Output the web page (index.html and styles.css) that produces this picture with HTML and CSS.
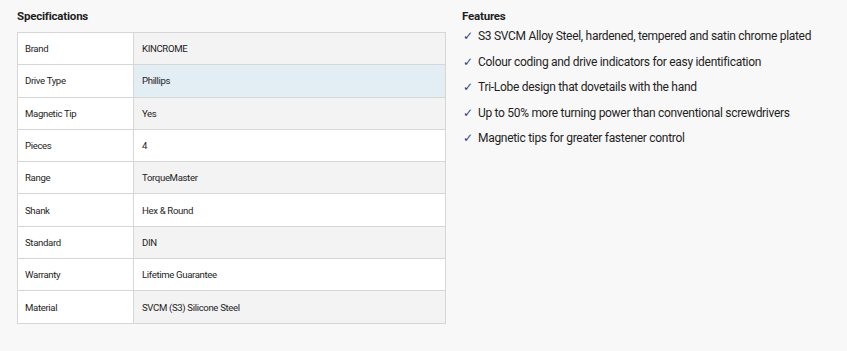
FILE: index.html
```html
<!DOCTYPE html>
<html>
<head>
<meta charset="utf-8">
<link rel="stylesheet" href="styles.css">
</head>
<body>
<div class="page">
  <section class="specs">
    <h2 class="title">Specifications</h2>
    <table class="spec-table">
      <tr><td class="k">Brand</td><td class="v">KINCROME</td></tr>
      <tr class="hover"><td class="k">Drive Type</td><td class="v">Phillips</td></tr>
      <tr><td class="k">Magnetic Tip</td><td class="v">Yes</td></tr>
      <tr><td class="k">Pieces</td><td class="v">4</td></tr>
      <tr><td class="k">Range</td><td class="v">TorqueMaster</td></tr>
      <tr><td class="k">Shank</td><td class="v">Hex &amp; Round</td></tr>
      <tr><td class="k">Standard</td><td class="v">DIN</td></tr>
      <tr><td class="k">Warranty</td><td class="v">Lifetime Guarantee</td></tr>
      <tr><td class="k">Material</td><td class="v">SVCM (S3) Silicone Steel</td></tr>
    </table>
  </section>
  <section class="features">
    <h2 class="ftitle">Features</h2>
    <ul class="flist">
      <li><span class="check">✓</span>S3 SVCM Alloy Steel, hardened, tempered and satin chrome plated</li>
      <li><span class="check">✓</span>Colour coding and drive indicators for easy identification</li>
      <li><span class="check">✓</span>Tri-Lobe design that dovetails with the hand</li>
      <li><span class="check">✓</span>Up to 50% more turning power than conventional screwdrivers</li>
      <li><span class="check">✓</span>Magnetic tips for greater fastener control</li>
    </ul>
  </section>
</div>
</body>
</html>
```
FILE: styles.css
```css
html, body {
  margin: 0;
  padding: 0;
  background: #f8f8f8;
}
body {
  font-family: Roboto, "Liberation Sans", sans-serif;
  color: #1e1e1e;
  width: 847px;
  height: 351px;
  overflow: hidden;
}
.page {
  display: flex;
  padding: 0 0 0 17px;
  gap: 16px;
}
.specs {
  width: 429px;
  flex: none;
}
.title {
  margin: 0;
  padding-top: 9px;
  height: 23px;
  font-size: 11.5px;
  font-weight: 700;
  line-height: 15px;
  letter-spacing: -0.2px;
}
.spec-table {
  width: 429px;
  border-collapse: collapse;
  font-size: 9.6px;
  letter-spacing: -0.35px;
}
.spec-table td {
  border: 1px solid #d6d6d6;
  height: 31.3px;
  padding: 0 0 0 7px;
  vertical-align: middle;
}
.spec-table .k {
  width: 108px;
  background: #ffffff;
}
.spec-table .v {
  padding-left: 8px;
  background: #ffffff;
}
.spec-table tr:nth-child(odd) .v {
  background: #f3f3f3;
}
.spec-table tr.hover .v {
  background: #e2eef4;
}
.features {
  flex: 1;
}
.ftitle {
  margin: 0;
  padding-top: 9px;
  font-size: 11.5px;
  font-weight: 700;
  line-height: 14px;
  letter-spacing: -0.2px;
}
.flist {
  list-style: none;
  margin: 1px 0 0;
  padding: 0 0 0 1px;
  font-size: 12px;
  line-height: 25.5px;
  letter-spacing: -0.3px;
}
.flist li {
  display: flex;
  align-items: center;
}
.check {
  color: #2c3a8f;
  width: 15px;
  font-size: 12px;
  font-weight: 700;
  font-family: "DejaVu Sans", sans-serif;
}
```
